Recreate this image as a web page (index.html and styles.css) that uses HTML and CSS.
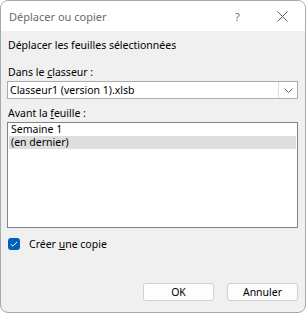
FILE: index.html
```html
<!DOCTYPE html>
<html lang="fr">
<head>
    <meta charset="UTF-8">
    <meta name="viewport" content="width=device-width, initial-scale=1.0">
    <title>Déplacer ou copier</title>
    <link rel="stylesheet" href="styles.css">
</head>
<body>

<div class="dialog">
    <div class="titlebar">
        <span class="title">Déplacer ou copier</span>
        <span class="help">?</span>
        <span class="close">
            <svg width="11" height="11" viewBox="0 0 11 11">
                <path d="M0.5 0.5 L10.5 10.5 M10.5 0.5 L0.5 10.5" stroke="#5f5f5f" stroke-width="1" fill="none"/>
            </svg>
        </span>
    </div>

    <div class="content">
        <div class="heading">Déplacer les feuilles sélectionnées</div>

        <div class="label label-book">Dans le <u>c</u>lasseur :</div>
        <div class="combo">
            <span class="combo-text">Classeur1 (version 1).xlsb</span>
            <span class="combo-button">
                <svg width="9" height="5" viewBox="0 0 9 5">
                    <path d="M0.5 0.5 L4.5 4.5 L8.5 0.5" stroke="#606060" stroke-width="1" fill="none"/>
                </svg>
            </span>
        </div>

        <div class="label label-sheet">Avant la <u>f</u>euille :</div>
        <div class="listbox">
            <div class="item">Semaine 1</div>
            <div class="item selected">(en dernier)</div>
        </div>

        <label class="check-row">
            <span class="checkbox">
                <svg width="8" height="6" viewBox="0 0 8 6">
                    <path d="M0.8 3.2 L2.9 5.2 L7.2 0.8" stroke="#fff" stroke-width="1" fill="none"/>
                </svg>
            </span>
            <span>Créer <u>u</u>ne copie</span>
        </label>

        <div class="actions">
            <button class="btn">OK</button>
            <button class="btn">Annuler</button>
        </div>
    </div>
</div>

</body>
</html>
```

FILE: styles.css
```css
* {
    box-sizing: border-box;
}
body {
    margin: 0;
    font-family: "Noto Sans", "Open Sans", sans-serif;
    font-size: 10.5px;
    color: #000;
    background-color: #fff;
}
.dialog {
    width: 306px;
    height: 313px;
    border: 1px solid #a8a8a8;
    border-radius: 8px;
    background-color: #f0f0f0;
    display: flex;
    flex-direction: column;
    overflow: hidden;
}
.titlebar {
    height: 30px;
    flex-shrink: 0;
    background-color: #fff;
    display: flex;
    align-items: center;
    padding-left: 8px;
}
.title {
    color: #6a6a6a;
    font-size: 11px;
    flex: 1;
}
.help {
    color: #707070;
    font-size: 11px;
    width: 42px;
}
.close {
    width: 28px;
    height: 11px;
    display: flex;
}
.content {
    flex: 1;
    display: flex;
    flex-direction: column;
    padding: 0 7px 11px 6px;
}
.heading {
    line-height: 14px;
    margin-top: 7px;
    padding-left: 1px;
}
.label {
    line-height: 14px;
    padding-left: 1px;
}
.label-book {
    margin-top: 13px;
}
.label-sheet {
    margin-top: 7px;
}
.combo {
    margin-top: 2px;
    height: 18px;
    border: 1px solid #ababab;
    background-color: #fff;
    display: flex;
    align-items: center;
}
.combo-text {
    flex: 1;
    padding-left: 2px;
}
.combo-button {
    width: 19px;
    height: 100%;
    border-left: 1px solid #dcdcdc;
    display: flex;
    align-items: center;
    justify-content: center;
}
.listbox {
    margin-top: 2px;
    height: 106px;
    border: 1px solid #828282;
    background-color: #fff;
    padding: 0 1px;
}
.item {
    height: 13px;
    line-height: 13px;
    padding-left: 2px;
}
.item.selected {
    background-color: #dedede;
}
.check-row {
    margin-top: 9px;
    display: flex;
    align-items: center;
    gap: 9px;
    line-height: 14px;
    padding-left: 1px;
}
.checkbox {
    width: 12px;
    height: 12px;
    border-radius: 3px;
    background-color: #005fb8;
    display: flex;
    align-items: center;
    justify-content: center;
}
.actions {
    margin-top: auto;
    display: flex;
    justify-content: flex-end;
    gap: 13px;
}
.btn {
    width: 71px;
    height: 18px;
    border: 1px solid #d0d0d0;
    border-radius: 3px;
    background-color: #fdfdfd;
    font-family: inherit;
    font-size: 10.5px;
    color: #000;
    padding: 0;
}
```
